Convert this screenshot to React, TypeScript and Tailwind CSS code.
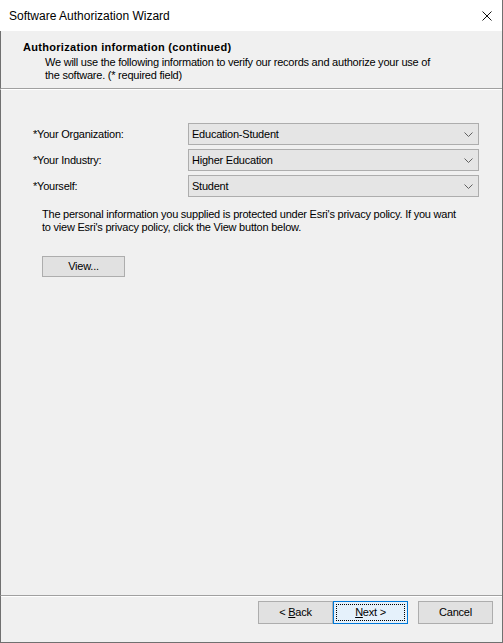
import React from 'react';

const ui = { fontFamily: '"Liberation Sans", Arial, sans-serif' };

const fields = [
  { label: '*Your Organization:', value: 'Education-Student' },
  { label: '*Your Industry:', value: 'Higher Education' },
  { label: '*Yourself:', value: 'Student' },
];

const Chevron: React.FC = () => (
  <svg width="9" height="5" viewBox="0 0 9 5" className="shrink-0">
    <path d="M0.5 0.5 L4.5 4.5 L8.5 0.5" fill="none" stroke="#606060" strokeWidth="1" />
  </svg>
);

const ComboBox: React.FC<{ value: string }> = ({ value }) => (
  <div className="w-[291px] h-[22px] bg-[#e5e5e5] border border-[#adadad] flex items-center justify-between pl-[3px] pr-[5px] text-[11px] tracking-[-0.23px] text-black">
    <span>{value}</span>
    <Chevron />
  </div>
);

const App: React.FC = () => {
  return (
    <div className="w-[503px] h-[643px] flex flex-col bg-[#f0f0f0] border-r border-b border-[#707070] text-black" style={ui}>
      {/* title bar */}
      <div className="h-[31px] shrink-0 bg-white flex items-center justify-between pl-[9px] pr-[10px]">
        <span className="text-[12px] text-black">Software Authorization Wizard</span>
        <svg width="10" height="10" viewBox="0 0 10 10">
          <path d="M0.5 0.5 L9.5 9.5 M9.5 0.5 L0.5 9.5" stroke="#111" strokeWidth="1" />
        </svg>
      </div>

      {/* header */}
      <div className="h-[58px] shrink-0 border-b border-[#a0a0a0] pt-[10px] pl-[22px] border-l border-l-[#707070]">
        <div className="text-[11px] font-bold leading-[13px] tracking-[0.3px]">Authorization information (continued)</div>
        <div className="text-[11px] leading-[13px] tracking-[-0.23px] pl-[22px] pt-[2px] w-[415px]">
          We will use the following information to verify our records and authorize your use of the software. (* required field)
        </div>
      </div>

      {/* body */}
      <div className="flex-1 border-t border-white border-l border-l-[#707070] pt-[33px] text-[11px] tracking-[-0.23px]">
        <div className="flex flex-col gap-[4px]">
          {fields.map((f) => (
            <div key={f.label} className="flex items-center">
              <span className="w-[187px] shrink-0 pl-[32px]">{f.label}</span>
              <ComboBox value={f.value} />
            </div>
          ))}
        </div>
        <p className="leading-[13px] pl-[41px] pt-[11px] w-[462px]">
          The personal information you supplied is protected under Esri's privacy policy. If you want to view Esri's privacy policy, click the View button below.
        </p>
        <div className="pl-[41px] pt-[22px]">
          <button className="w-[83px] h-[21px] bg-[#e1e1e1] border border-[#adadad] text-black">View...</button>
        </div>
      </div>

      {/* bottom separator & buttons */}
      <div className="h-[47px] shrink-0 border-t border-[#a0a0a0] border-l border-l-[#707070] text-[11px] tracking-[-0.23px]">
        <div className="border-t border-white h-full flex items-start pt-[4px] pl-[257px]">
          <button className="w-[75px] h-[23px] bg-[#e1e1e1] border border-[#adadad]">
            &lt; <span className="underline">B</span>ack
          </button>
          <button className="w-[75px] h-[23px] bg-[#e5f1fb] border border-[#0078d7] p-[2px]">
            <div className="w-full h-full border border-dotted border-black flex items-center justify-center">
              <span><span className="underline">N</span>ext &gt;</span>
            </div>
          </button>
          <button className="ml-[10px] w-[75px] h-[23px] bg-[#e1e1e1] border border-[#adadad]">Cancel</button>
        </div>
      </div>
    </div>
  );
};

export default App;
